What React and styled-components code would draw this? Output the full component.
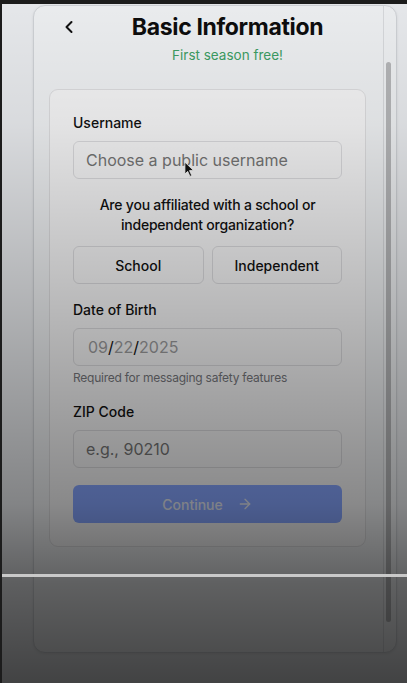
import styled, { createGlobalStyle } from "styled-components";
import { ChevronLeft, ArrowRight } from "lucide-react";

const GlobalStyle = createGlobalStyle`
  body {
    margin: 0;
    background: #1c1c1c;
    font-family: Inter, "Noto Sans", sans-serif;
  }
  * { box-sizing: border-box; }
`;

export default function App() {
  return (
    <>
      <GlobalStyle />
      <Screen>
        <Panel>
          <Content>
            <Header>
              <BackButton aria-label="Back">
                <ChevronLeft size={20} strokeWidth={2.4} />
              </BackButton>
              <Heading>
                <Title>Basic Information</Title>
                <Subtitle>First season free!</Subtitle>
              </Heading>
            </Header>

            <Card>
              <Label>Username</Label>
              <InputWrap>
                <Field placeholder="Choose a public username" />
                <Cursor viewBox="0 0 12 18" width="11" height="17">
                  <path d="M1 1 L1 14 L4 11 L6.5 16.5 L8.5 15.6 L6 10.2 L10.5 10.2 Z" fill="#111" stroke="#fff" strokeWidth="0.9" />
                </Cursor>
              </InputWrap>

              <Question>
                Are you affiliated with a school or
                <br />
                independent organization?
              </Question>
              <Choices>
                <Choice>School</Choice>
                <Choice>Independent</Choice>
              </Choices>

              <Label $top={16}>Date of Birth</Label>
              <DateBox>
                <span>09</span><Slash>/</Slash><span>22</span><Slash>/</Slash><span>2025</span>
              </DateBox>
              <Helper>Required for messaging safety features</Helper>

              <Label $top={16}>ZIP Code</Label>
              <Field placeholder="e.g., 90210" />

              <Continue disabled>
                Continue
                <ArrowRight size={16} strokeWidth={2} />
              </Continue>
            </Card>
          </Content>
          <Track>
            <Thumb />
          </Track>
        </Panel>
        <Shade />
        <Glare />
      </Screen>
    </>
  );
}

const Screen = styled.div`
  position: relative;
  width: 407px;
  height: 683px;
  overflow: hidden;
  background: #e9ebee;
  border-top: 4px solid #1c1c1c;
  border-left: 2px solid #1c1c1c;
  padding: 1px 10px 0 31px;
`;

const Panel = styled.div`
  width: 364px;
  height: 648px;
  display: flex;
  background: #eef0f2;
  border: 1px solid #cfd2d6;
  border-radius: 12px;
  overflow: hidden;
  box-shadow: 0 1px 3px rgba(0, 0, 0, 0.08);
`;

const Content = styled.div`
  flex: 1;
  padding: 6px 17px 0 15px;
`;

const Header = styled.div`
  display: flex;
  align-items: flex-start;
`;

const BackButton = styled.button`
  width: 40px;
  height: 30px;
  flex: none;
  display: flex;
  align-items: center;
  justify-content: center;
  border: none;
  background: none;
  padding: 0;
  color: #111;
`;

const Heading = styled.div`
  flex: 1;
  display: flex;
  flex-direction: column;
  align-items: center;
  gap: 3px;
`;

const Title = styled.h1`
  margin: 0;
  font-size: 23px;
  line-height: 30px;
  font-weight: 700;
  color: #0d0d0d;
  letter-spacing: -0.015em;
`;

const Subtitle = styled.p`
  margin: 0;
  font-size: 13.5px;
  line-height: 20px;
  color: #3d9e64;
`;

const Card = styled.div`
  margin-top: 24px;
  padding: 23px 23px 23px;
  display: flex;
  flex-direction: column;
  background: #f4f4f5;
  border: 1px solid #dcdcde;
  border-radius: 9px;
`;

const Label = styled.div`
  margin-top: ${(p) => p.$top || 0}px;
  font-size: 14px;
  line-height: 20px;
  font-weight: 500;
  color: #111;
`;

const InputWrap = styled.div`
  position: relative;
`;

const Field = styled.input`
  width: 100%;
  height: 38px;
  margin-top: 8px;
  padding: 0 12px;
  border: 1px solid #d9d9dc;
  border-radius: 6px;
  background: #f4f4f5;
  font-family: inherit;
  font-size: 16px;
  color: #111;
  &::placeholder { color: #747474; }
`;

const Cursor = styled.svg`
  position: absolute;
  left: 111px;
  top: 28px;
`;

const Question = styled.p`
  margin: 16px 0 0;
  text-align: center;
  font-size: 14px;
  line-height: 20px;
  font-weight: 500;
  letter-spacing: -0.015em;
  color: #111;
`;

const Choices = styled.div`
  display: grid;
  grid-template-columns: 1fr 1fr;
  gap: 8px;
  margin-top: 11px;
`;

const Choice = styled.button`
  height: 38px;
  border: 1px solid #d9d9dc;
  border-radius: 6px;
  background: #f4f4f5;
  font-family: inherit;
  font-size: 14px;
  font-weight: 500;
  color: #111;
`;

const DateBox = styled.div`
  height: 38px;
  margin-top: 8px;
  padding: 0 14px;
  display: flex;
  align-items: center;
  border: 1px solid #d9d9dc;
  border-radius: 6px;
  font-size: 16px;
  color: #9a9a9c;
`;

const Slash = styled.span`
  color: #111;
`;

const Helper = styled.div`
  margin-top: 4px;
  font-size: 12px;
  line-height: 16px;
  letter-spacing: -0.02em;
  color: #76777c;
`;

const Continue = styled.button`
  height: 38px;
  margin-top: 17px;
  display: flex;
  align-items: center;
  justify-content: center;
  gap: 14px;
  border: none;
  border-radius: 6px;
  background: #86a5ff;
  font-family: inherit;
  font-size: 14px;
  font-weight: 500;
  color: #e2e6f0;
`;

const Track = styled.div`
  width: 13px;
  flex: none;
  border-left: 1px solid #d7d9dc;
  padding: 56px 0 0 2px;
`;

const Thumb = styled.div`
  width: 5px;
  height: 560px;
  border-radius: 3px;
  background: #b5b6b8;
`;

const Shade = styled.div`
  position: absolute;
  inset: 0;
  pointer-events: none;
  background: linear-gradient(
    to bottom,
    rgba(0, 0, 0, 0.02) 0px,
    rgba(0, 0, 0, 0.07) 120px,
    rgba(0, 0, 0, 0.24) 300px,
    rgba(0, 0, 0, 0.44) 500px,
    rgba(0, 0, 0, 0.6) 580px,
    rgba(0, 0, 0, 0.72) 683px
  );
`;

const Glare = styled.div`
  position: absolute;
  top: 570px;
  left: -2px;
  right: 0;
  height: 3px;
  background: #c9c9c9;
`;
